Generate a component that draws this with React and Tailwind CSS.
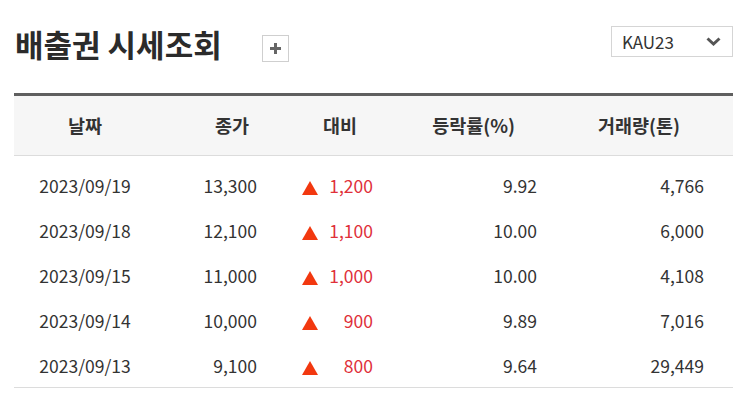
const rows = [
  { date: "2023/09/19", close: "13,300", diff: "1,200", rate: "9.92", volume: "4,766" },
  { date: "2023/09/18", close: "12,100", diff: "1,100", rate: "10.00", volume: "6,000" },
  { date: "2023/09/15", close: "11,000", diff: "1,000", rate: "10.00", volume: "4,108" },
  { date: "2023/09/14", close: "10,000", diff: "900", rate: "9.89", volume: "7,016" },
  { date: "2023/09/13", close: "9,100", diff: "800", rate: "9.64", volume: "29,449" },
];

const cols = "grid grid-cols-[142px_134px_100px_160px_183px]";

function UpTriangle() {
  return (
    <svg width="16" height="14" viewBox="0 0 16 14" className="mt-[3px] shrink-0">
      <polygon points="8,0 16,14 0,14" fill="#f2380f" />
    </svg>
  );
}

export default function App() {
  return (
    <div
      className="h-[417px] w-[747px] bg-white px-[14px] text-[#333]"
      style={{ fontFamily: '"Noto Sans CJK KR", "Noto Sans", sans-serif' }}
    >
      <div className="flex h-[93px] items-start">
        <h1 className="ml-px mt-[25px] text-[31px] font-bold leading-[38px] text-[#2b2b2b]">
          배출권 시세조회
        </h1>
        <button
          type="button"
          className="ml-[40px] mt-[35px] grid h-[27px] w-[27px] place-items-center border border-[#cfcfcf] bg-white"
        >
          <svg width="11" height="11" viewBox="0 0 11 11">
            <rect x="4" y="0" width="3" height="11" fill="#666" />
            <rect x="0" y="4" width="11" height="3" fill="#666" />
          </svg>
        </button>
        <div className="ml-auto mt-[26px] flex h-[31px] w-[122px] items-center justify-between border border-[#d5d5d5] pl-[10px] pr-[11px]">
          <span className="text-[17px] leading-none text-[#333]">KAU23</span>
          <svg width="15" height="9" viewBox="0 0 15 9">
            <polyline points="1.5,1.5 7.5,7 13.5,1.5" fill="none" stroke="#555" strokeWidth="3" />
          </svg>
        </div>
      </div>

      <div className="border-t-[3px] border-[#5f5f5f]">
        <div className={`${cols} h-[60px] items-center border-b border-[#dcdcdc] bg-[#f6f6f6] text-[18.5px] font-bold text-[#333]`}>
          <div className="text-center">날짜</div>
          <div className="pr-[41px] text-right">종가</div>
          <div className="pr-[33px] text-right">대비</div>
          <div className="pr-[35px] text-right">등락률(%)</div>
          <div className="pr-[53px] text-right">거래량(톤)</div>
        </div>
        <div className="border-b border-[#dcdcdc] pt-[6px]">
          {rows.map((r) => (
            <div key={r.date} className={`${cols} h-[45px] items-center pt-[4px] text-[17.5px]`}>
              <div className="text-center">{r.date}</div>
              <div className="pr-[33px] text-right">{r.close}</div>
              <div className="flex items-center justify-between pl-[12px] pr-[17px]">
                <UpTriangle />
                <span className="text-[#e0303a]">{r.diff}</span>
              </div>
              <div className="pr-[13px] text-right">{r.rate}</div>
              <div className="pr-[29px] text-right">{r.volume}</div>
            </div>
          ))}
        </div>
      </div>
    </div>
  );
}
